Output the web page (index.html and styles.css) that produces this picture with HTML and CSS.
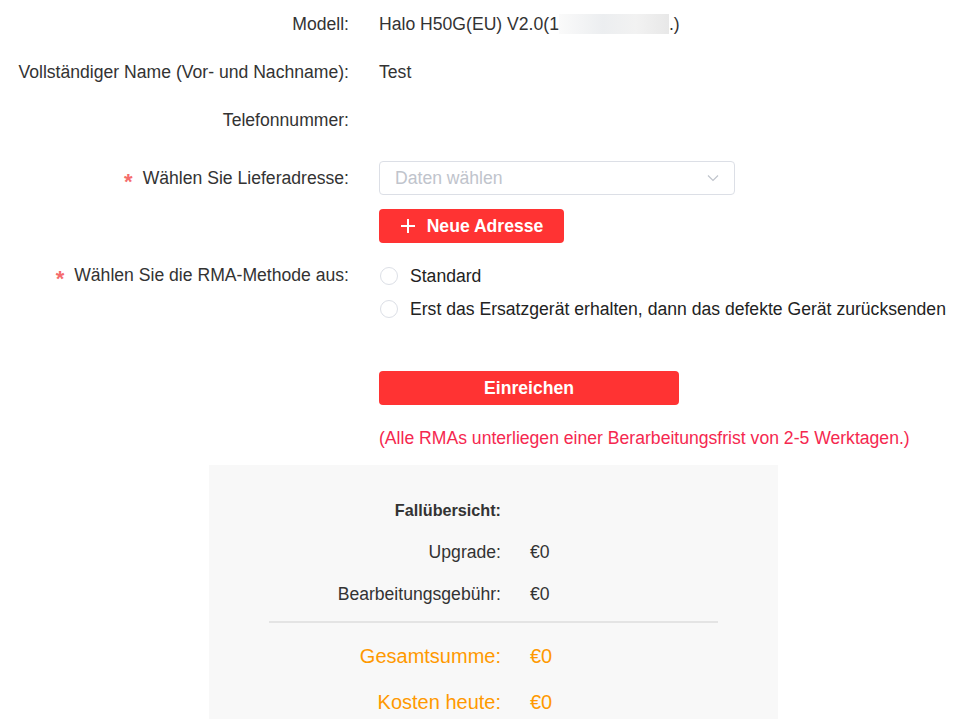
FILE: index.html
```html
<!DOCTYPE html>
<html lang="de">
<head>
    <meta charset="UTF-8">
    <meta name="viewport" content="width=device-width, initial-scale=1.0">
    <title>RMA</title>
    <link rel="stylesheet" href="styles.css">
</head>
<body>
    <div class="form">
        <div class="row">
            <div class="label">Modell:</div>
            <div class="value">Halo H50G(EU) V2.0(1<span class="blur"></span>.)</div>
        </div>
        <div class="row">
            <div class="label">Vollständiger Name (Vor- und Nachname):</div>
            <div class="value">Test</div>
        </div>
        <div class="row">
            <div class="label">Telefonnummer:</div>
            <div class="value"></div>
        </div>

        <div class="row row-select">
            <div class="label"><span class="req">*</span>Wählen Sie Lieferadresse:</div>
            <div class="value">
                <div class="select">
                    <span class="placeholder">Daten wählen</span>
                    <svg class="arrow" width="14" height="14" viewBox="0 0 14 14"><path d="M2 4.5 L7 9.5 L12 4.5" fill="none" stroke="#c0c4cc" stroke-width="1.2"/></svg>
                </div>
                <button class="btn btn-add">
                    <svg width="16" height="16" viewBox="0 0 16 16"><path d="M8 1 V15 M1 8 H15" stroke="#fff" stroke-width="2"/></svg>
                    Neue Adresse
                </button>
            </div>
        </div>

        <div class="row row-radio">
            <div class="label"><span class="req">*</span>Wählen Sie die RMA-Methode aus:</div>
            <div class="value">
                <label class="radio"><span class="circle"></span>Standard</label>
                <label class="radio"><span class="circle"></span>Erst das Ersatzgerät erhalten, dann das defekte Gerät zurücksenden</label>
            </div>
        </div>

        <div class="row row-submit">
            <div class="label"></div>
            <div class="value">
                <button class="btn btn-submit">Einreichen</button>
                <p class="note">(Alle RMAs unterliegen einer Berarbeitungsfrist von 2-5 Werktagen.)</p>
            </div>
        </div>
    </div>

    <div class="summary">
        <div class="sum-row sum-title">
            <div class="sum-label">Fallübersicht:</div>
            <div class="sum-value"></div>
        </div>
        <div class="sum-row">
            <div class="sum-label">Upgrade:</div>
            <div class="sum-value">€0</div>
        </div>
        <div class="sum-row">
            <div class="sum-label">Bearbeitungsgebühr:</div>
            <div class="sum-value">€0</div>
        </div>
        <div class="divider"></div>
        <div class="sum-row total">
            <div class="sum-label">Gesamtsumme:</div>
            <div class="sum-value">€0</div>
        </div>
        <div class="sum-row total">
            <div class="sum-label">Kosten heute:</div>
            <div class="sum-value">€0</div>
        </div>
    </div>
</body>
</html>
```

FILE: styles.css
```css
body {
    margin: 0;
    font-family: "Liberation Sans", Arial, sans-serif;
    font-size: 17.6px;
    color: #333;
    background: #fff;
}
.form {
    padding-top: 8px;
}
.row {
    display: flex;
    align-items: flex-start;
    min-height: 48px;
}
.label {
    width: 349px;
    flex: none;
    text-align: right;
    line-height: 32px;
}
.value {
    margin-left: 30px;
    line-height: 32px;
}
.blur {
    display: inline-block;
    width: 110px;
    height: 20px;
    vertical-align: -4px;
    background: linear-gradient(90deg, #fafafa, #eceef0 40%, #f2f2f2 70%, #e8e8e8);
}
.req {
    color: #f56c6c;
    margin-right: 10px;
    font-size: 22px;
    font-weight: bold;
    vertical-align: -5px;
    line-height: 0;
}
.row-select {
    margin-top: 9px;
}
.row-select .label {
    padding-top: 1px;
}
.select {
    border: 1px solid #dcdfe6;
    border-radius: 4px;
    display: flex;
    align-items: center;
    justify-content: space-between;
    padding: 0 14px 0 15px;
    box-sizing: border-box;
    width: 356px;
    height: 34px;
}
.placeholder {
    color: #c0c4cc;
}
.btn {
    border: none;
    border-radius: 4px;
    background: #ff3333;
    color: #fff;
    font-family: "Liberation Sans", Arial, sans-serif;
    font-size: 17.6px;
    font-weight: bold;
    height: 34px;
    cursor: pointer;
}
.btn-add {
    margin-top: 14px;
    width: 185px;
    display: flex;
    align-items: center;
    justify-content: center;
    gap: 11px;
    padding: 0;
}
.row-radio {
    margin-top: 16px;
}
.radio {
    display: flex;
    align-items: center;
    height: 33px;
    color: #222;
}
.circle {
    width: 18px;
    height: 18px;
    border: 1px solid #dcdfe6;
    border-radius: 50%;
    box-sizing: border-box;
    margin-left: 1px;
    margin-right: 12px;
}
.row-submit {
    margin-top: 46px;
}
.btn-submit {
    width: 300px;
    display: block;
}
.note {
    margin: 21px 0 0;
    color: #f5284f;
    line-height: 24px;
}
.summary {
    width: 569px;
    margin: 15px 0 0 209px;
    background: #f8f8f8;
    padding: 24px 0 20px;
}
.sum-row {
    display: flex;
    line-height: 42px;
}
.sum-label {
    width: 292px;
    text-align: right;
}
.sum-value {
    margin-left: 29px;
}
.sum-title {
    font-weight: bold;
    font-size: 16.2px;
}
.divider {
    height: 2px;
    background: #e4e4e4;
    margin: 6px 60px 10px;
}
.total {
    color: #ff9900;
    font-size: 20px;
    line-height: 46px;
}
```
